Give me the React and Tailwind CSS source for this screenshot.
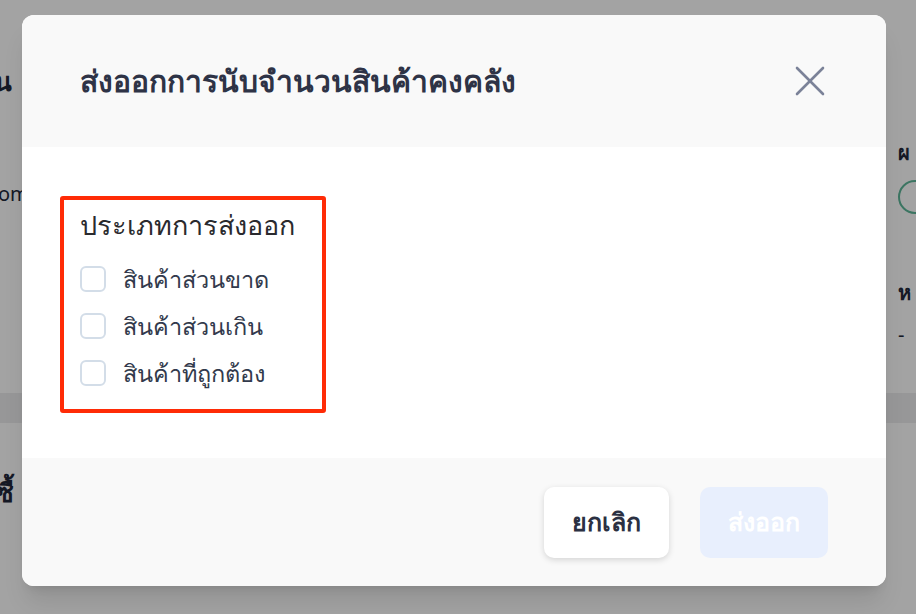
import React from 'react';

const font = { fontFamily: '"Noto Sans", "DejaVu Sans", sans-serif' };

function Checkbox({ label }) {
    return (
        <label className="flex items-center gap-[17px] h-[47px]">
            <span className="w-[26px] h-[26px] rounded-[6px] border-2 border-[#d3dde8] bg-white shrink-0" />
            <span className="text-[23.5px] leading-[30px] text-[#323a4c]">{label}</span>
        </label>
    );
}

export default function App() {
    return (
        <div className="relative w-[916px] h-[614px] overflow-hidden bg-white" style={font}>
            {/* page behind the dialog */}
            <div className="w-full h-full flex flex-col text-[#22283a]">
                <div className="flex justify-between h-[393px]">
                    <div className="flex flex-col pt-[62px]">
                        <p className="text-[26px] font-bold -ml-[6px]">น</p>
                        <p className="text-[20px] mt-[78px] -ml-[2px]">om</p>
                    </div>
                    <div className="flex flex-col pt-[138px] w-[18px]">
                        <p className="text-[20px] font-bold">ผ</p>
                        <span className="mt-[12px] w-[34px] h-[34px] rounded-full border-2 border-[#5fb89a]" />
                        <p className="text-[20px] font-bold mt-[64px]">ห</p>
                        <p className="text-[20px] mt-[12px]">-</p>
                    </div>
                </div>
                <div className="h-[30px] bg-[#ececee]" />
                <div className="pt-[50px]">
                    <p className="text-[26px] font-bold -ml-[4px]">ซื้</p>
                </div>
            </div>

            {/* overlay */}
            <div className="absolute inset-0 bg-[rgba(0,0,0,0.36)] flex items-start justify-start pt-[15px] pl-[22px]">
                <div className="w-[864px] h-[571px] rounded-[12px] overflow-hidden bg-white flex flex-col shadow-xl">
                    <div className="h-[132px] bg-[#f9f9f9] flex items-center justify-between pl-[58px] pr-[60px]">
                        <h2 className="text-[30px] leading-[40px] font-bold text-[#2e3346]">ส่งออกการนับจำนวนสินค้าคงคลัง</h2>
                        <svg width="32" height="32" viewBox="0 0 32 32" fill="none" stroke="#7b8298" strokeWidth="2.6" strokeLinecap="round">
                            <path d="M3 3 L29 29" />
                            <path d="M29 3 L3 29" />
                        </svg>
                    </div>
                    <div className="flex-1 bg-white pt-[49px] pl-[38px]">
                        <div className="w-[266px] h-[217px] border-[4px] border-[#ff2b06] rounded-[3px] pl-[16px] pt-[7px]">
                            <p className="text-[27px] leading-[36px] text-[#2a2a2e] mb-[12px]">ประเภทการส่งออก</p>
                            <Checkbox label="สินค้าส่วนขาด" />
                            <Checkbox label="สินค้าส่วนเกิน" />
                            <Checkbox label="สินค้าที่ถูกต้อง" />
                        </div>
                    </div>
                    <div className="h-[128px] bg-[#f9f9f9] flex items-center justify-end gap-[31px] pr-[58px]">
                        <button className="w-[125px] h-[71px] rounded-[10px] bg-white shadow-[0_2px_6px_rgba(0,0,0,0.15)] text-[25px] font-bold text-[#2b3042]">
                            ยกเลิก
                        </button>
                        <button className="w-[128px] h-[71px] rounded-[10px] bg-[#e8effd] text-[25px] font-bold text-white">
                            ส่งออก
                        </button>
                    </div>
                </div>
            </div>
        </div>
    );
}
